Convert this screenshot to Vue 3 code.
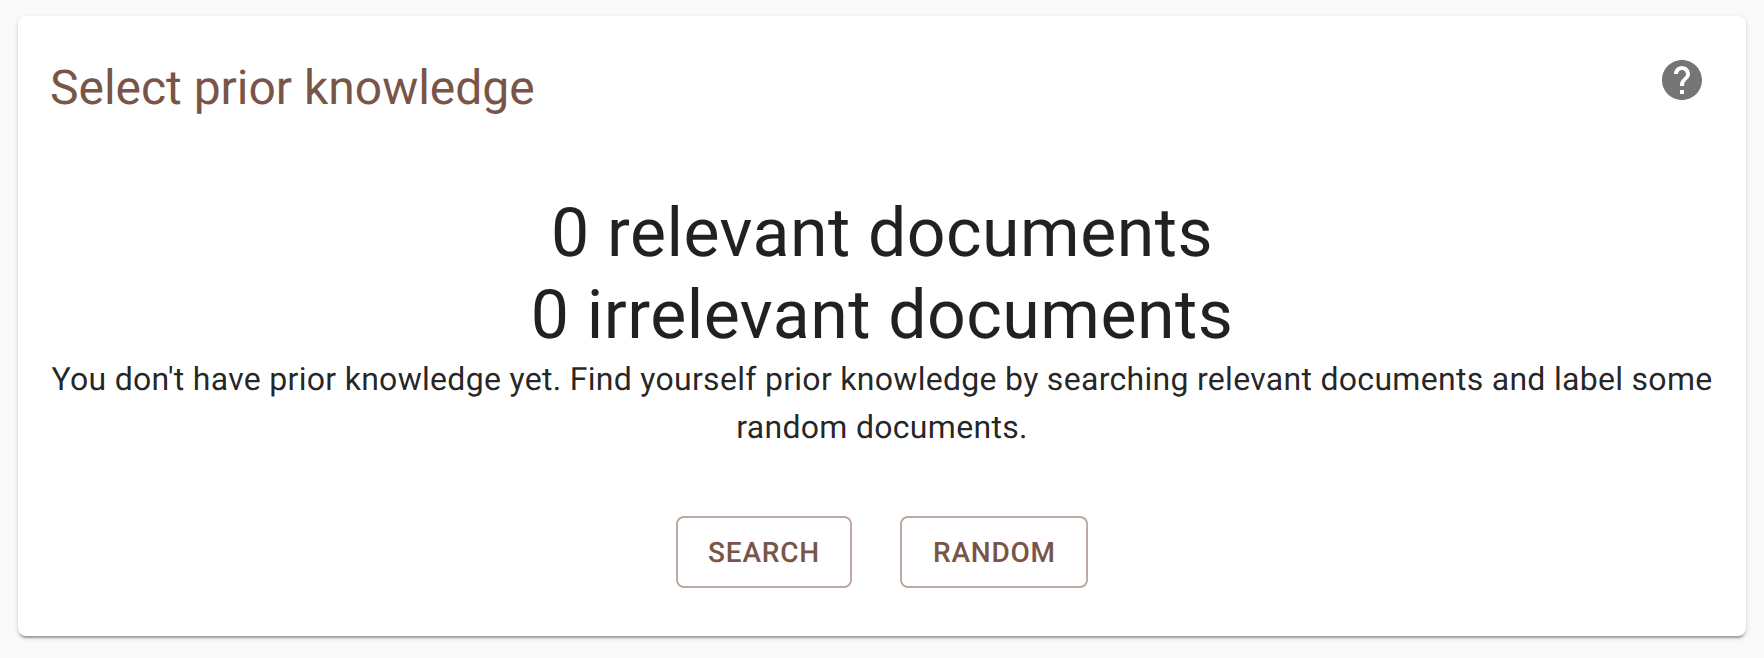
<script setup>
</script>

<template>
  <main class="page">
    <section class="card">
      <header class="header">
        <h1 class="title">Select prior knowledge</h1>
        <button class="help" aria-label="Help">
          <svg viewBox="0 0 24 24"><path d="M12 2C6.48 2 2 6.48 2 12s4.48 10 10 10 10-4.48 10-10S17.52 2 12 2zm1 17h-2v-2h2v2zm2.07-7.75l-.9.92C13.45 12.9 13 13.5 13 15h-2v-.5c0-1.1.45-2.1 1.17-2.83l1.24-1.26c.37-.36.59-.86.59-1.41 0-1.1-.9-2-2-2s-2 .9-2 2H8c0-2.21 1.79-4 4-4s4 1.79 4 4c0 .88-.36 1.68-.93 2.25z" /></svg>
        </button>
      </header>
      <div class="content">
        <h2 class="count">0 relevant documents</h2>
        <h2 class="count">0 irrelevant documents</h2>
        <p class="note">You don't have prior knowledge yet. Find yourself prior knowledge by searching relevant documents and label some random documents.</p>
      </div>
      <div class="actions">
        <button class="outlined">Search</button>
        <button class="outlined">Random</button>
      </div>
    </section>
  </main>
</template>

<style>
body { background: #fafafa; }
</style>

<style scoped>
.page { box-sizing: border-box; height: 658px; padding: 16px 18px 22px; font-family: Roboto, sans-serif; background: #fafafa; text-rendering: geometricPrecision; }
.card { box-sizing: border-box; height: 620px; padding: 32px; background: #fff; border-radius: 8px; box-shadow: 0 4px 2px -2px rgba(0,0,0,.2), 0 2px 2px rgba(0,0,0,.14), 0 2px 6px rgba(0,0,0,.12); }
.header { display: flex; justify-content: space-between; align-items: flex-start; height: 144px; }
.title { margin: 8px 0 0; color: #795548; font-size: 48px; line-height: 64px; font-weight: 400; letter-spacing: -.02px; }
.help { width: 48px; height: 48px; margin: 8px 8px 0 0; padding: 0; border: 0; background: none; }
.help svg { display: block; width: 48px; height: 48px; fill: #757575; }
.content { text-align: center; color: rgba(0,0,0,.87); }
.count { margin: 0; font-size: 68px; line-height: 82px; font-weight: 400; letter-spacing: .47px; }
.note { margin: -1px 0 0; font-size: 32px; line-height: 48px; letter-spacing: .295px; }
.actions { display: flex; justify-content: center; gap: 48px; margin-top: 65px; }
.outlined { box-sizing: border-box; height: 72px; padding: 0 30.5px; border: 2px solid rgba(121,85,72,.5); border-radius: 8px; background: #fff; color: #795548; font: 500 28px/49px Roboto, sans-serif; letter-spacing: .8px; text-transform: uppercase; text-rendering: geometricPrecision; }
</style>
